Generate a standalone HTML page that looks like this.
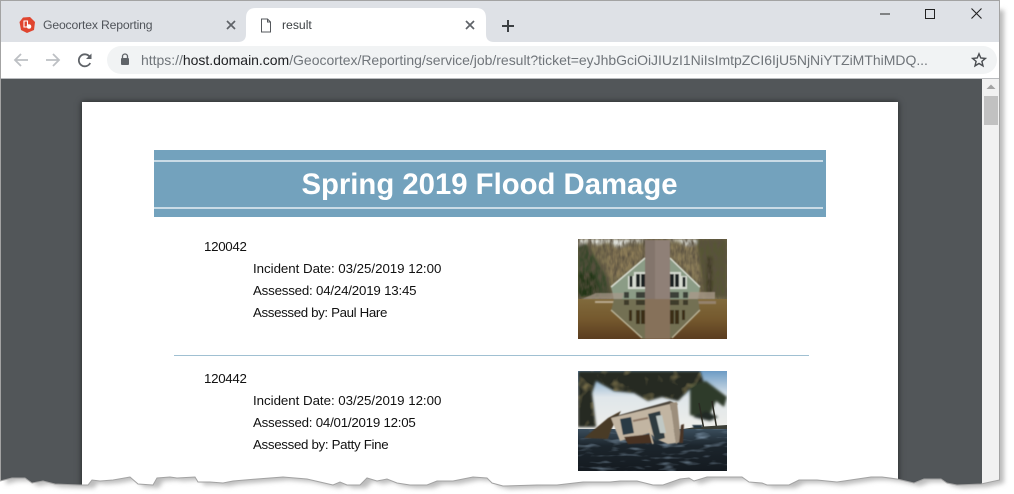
<!DOCTYPE html>
<html><head><meta charset="utf-8"><style>
html,body{margin:0;padding:0;background:#fff}
body{width:1014px;height:494px;overflow:hidden;position:relative;font-family:"Liberation Sans",sans-serif}
.a{position:absolute;white-space:nowrap}
.t{font-size:13.300px;line-height:17px;color:#111}
#win{position:absolute;left:0;top:0;width:1000px;height:494px;background:#fff;overflow:hidden;
clip-path:polygon(0px 481px,12px 478px,25px 478px,32px 483px,43px 481px,55px 484px,80px 485px,88px 485px,92px 480px,100px 481px,113px 480px,130px 477px,138px 484px,153px 485px,157px 478px,170px 477px,177px 478px,195px 477px,198px 482px,210px 482px,223px 483px,233px 481px,257px 479px,283px 477px,307px 479px,320px 482px,333px 485px,340px 482px,347px 485px,360px 485px,367px 478px,377px 481px,387px 479px,397px 483px,410px 485px,427px 485px,437px 481px,453px 481px,473px 477px,487px 478px,492px 483px,503px 486px,537px 485px,557px 485px,583px 482px,593px 482px,610px 482px,620px 481px,637px 481px,653px 485px,663px 485px,680px 479px,689px 478px,694px 481px,707px 477px,731px 477px,742px 477px,749px 482px,762px 483px,767px 485px,789px 485px,799px 480px,817px 480px,837px 482px,871px 477px,882px 477px,897px 479px,914px 483px,924px 479px,941px 479px,947px 483px,957px 485px,981px 484px,999px 480px,1000px 480px,1000px 0px,0px 0px)}
</style></head><body>
<svg class="a" style="left:0;top:0" width="1014" height="494"><defs><filter id="s" x="-5%" y="-5%" width="110%" height="110%"><feGaussianBlur stdDeviation="2.500"/></filter></defs>
<polygon transform="translate(0,-2)" filter="url(#s)" fill="#bcbcbc" points="6,486 18,483 31,483 38,488 49,486 61,489 86,490 94,490 98,485 106,486 119,485 136,482 144,489 159,490 163,483 176,482 183,483 201,482 204,487 216,487 229,488 239,486 263,484 289,482 313,484 326,487 339,490 346,487 353,490 366,490 373,483 383,486 393,484 403,488 416,490 433,490 443,486 459,486 479,482 493,483 498,488 509,491 543,490 563,490 589,487 599,487 616,487 626,486 643,486 659,490 669,490 686,484 695,483 700,486 713,482 737,482 748,482 755,487 768,488 773,490 795,490 805,485 823,485 843,487 877,482 888,482 903,484 920,488 930,484 947,484 953,488 963,490 987,489 1004,485 1004,12 6,12"/></svg>
<div id="win">
<div class="a" style="left:0;top:0;width:1000px;height:42px;background:#dee1e6"></div>
<div class="a" style="left:0;top:42px;width:1000px;height:36px;background:#fff"></div>
<div class="a" style="left:0;top:78px;width:1000px;height:1px;background:#b9bbbe"></div>
<div class="a" style="left:0;top:79px;width:982px;height:415px;background:#525659"></div>
<div class="a" style="left:982px;top:79px;width:18px;height:415px;background:#f1f1f1"></div>
<div class="a" style="left:984px;top:96px;width:14px;height:29px;background:#c1c1c1"></div>
<svg class="a" style="left:982px;top:79px" width="18" height="16"><path d="M4.500 10 L9 5.500 L13.500 10Z" fill="#a3a3a3"/></svg>
<!-- active tab -->
<svg class="a" style="left:238px;top:8px" width="260" height="35"><path d="M0 34 Q8 34 8 26 V10 Q8 0 18 0 H238 Q248 0 248 10 V26 Q248 34 256 34Z" fill="#fff"/></svg>
<svg class="a" style="left:18px;top:16px" width="18" height="18" viewBox="0 0 18 18"><path d="M5 1.500 L12 1 L17 6 L16 14 L9 17 L3 14 L1.500 6Z" fill="#e0452f"/><path d="M6 5 H9.500 V11 H6Z" fill="none" stroke="#fff" stroke-width="1.100"/><circle cx="11" cy="10.500" r="2.300" fill="#fff"/></svg>
<div class="a" style="left:43px;top:18px;font-size:12.2px;line-height:14px;color:#50545a;letter-spacing:-.16px">Geocortex Reporting</div>
<svg class="a" style="left:225px;top:19px" width="12" height="12"><path d="M2 2 L10 10 M10 2 L2 10" stroke="#5f6368" stroke-width="1.700"/></svg>
<svg class="a" style="left:260px;top:18px" width="12" height="15" viewBox="0 0 12 15"><path d="M1.500 1 H7.500 L10.500 4 V14 H1.500Z M7.500 1 V4 H10.500" fill="none" stroke="#55585c" stroke-width="1"/></svg>
<div class="a" style="left:282px;top:18px;font-size:12.2px;line-height:14px;color:#3c4043">result</div>
<svg class="a" style="left:464px;top:19px" width="12" height="12"><path d="M2 2 L10 10 M10 2 L2 10" stroke="#5f6368" stroke-width="1.700"/></svg>
<svg class="a" style="left:500px;top:18px" width="16" height="16"><path d="M8 2 V14 M2 8 H14" stroke="#3c4043" stroke-width="2"/></svg>
<!-- window buttons -->
<svg class="a" style="left:870px;top:4px" width="120" height="20" shape-rendering="crispEdges"><path d="M10 10 H20" stroke="#222" stroke-width="1"/><rect x="55.500" y="5.500" width="9" height="9" fill="none" stroke="#222"/></svg>
<svg class="a" style="left:966px;top:4px" width="20" height="20"><path d="M5.500 4.500 L15.500 14.500 M15.500 4.500 L5.500 14.500" stroke="#222" stroke-width="1.100"/></svg>
<!-- toolbar -->
<svg class="a" style="left:12px;top:51px" width="18" height="18"><path d="M16 9 H3 M9 3 L3 9 L9 15" fill="none" stroke="#bdc0c4" stroke-width="1.800"/></svg>
<svg class="a" style="left:44px;top:51px" width="18" height="18"><path d="M2 9 H15 M9 3 L15 9 L9 15" fill="none" stroke="#bdc0c4" stroke-width="1.800"/></svg>
<svg class="a" style="left:76px;top:51px" width="18" height="18" viewBox="0 0 18 18"><path d="M14.200 12 A6 6 0 1 1 13.500 5.500" fill="none" stroke="#5f6368" stroke-width="1.800"/><path d="M15.500 2.500 V8 H10Z" fill="#5f6368"/></svg>
<div class="a" style="left:107px;top:46px;width:890px;height:28px;background:#f1f3f4;border-radius:14px"></div>
<svg class="a" style="left:119px;top:52px" width="12" height="15"><path d="M3.500 6 V4.500 A2.500 2.500 0 0 1 8.500 4.500 V6" fill="none" stroke="#5f6368" stroke-width="1.300"/><rect x="2" y="6" width="8" height="7" rx="1" fill="#5f6368"/></svg>
<div class="a" id="url" style="left:141px;top:52px;font-size:14px;line-height:16px;color:#70757a;letter-spacing:-.02px">https://<span style="color:#202124">host.domain.com</span>/Geocortex/Reporting/service/job/result?ticket=eyJhbGciOiJIUzI1NiIsImtpZCI6IjU5NjNiYTZiMThiMDQ...</div>
<svg class="a" style="left:971px;top:52px" width="16" height="16" viewBox="0 0 16 16"><path d="M8 1.800 L9.800 6 L14.400 6.400 L10.900 9.400 L12 13.900 L8 11.500 L4 13.900 L5.100 9.400 L1.600 6.400 L6.200 6Z" fill="none" stroke="#4a4d51" stroke-width="1.400"/></svg>
<!-- paper -->
<div class="a" style="left:82px;top:102px;width:816px;height:400px;background:#fff;box-shadow:0 0 6px rgba(0,0,0,.6)"></div>
<div class="a" style="left:154px;top:150px;width:672px;height:67px;background:#73a2bd"></div>
<div class="a" style="left:154px;top:160px;width:669px;height:2px;background:#c9dbe6"></div>
<div class="a" style="left:154px;top:207px;width:669px;height:2px;background:#c9dbe6"></div>
<div class="a" style="left:155px;top:167px;width:669px;text-align:center;font-size:29.300px;line-height:36px;font-weight:bold;color:#fff;">Spring 2019 Flood Damage</div>
<div class="a t" style="left:204px;top:238px;letter-spacing:-.3px">120042</div>
<div class="a t" style="left:253px;top:260px;letter-spacing:-.03px">Incident Date: 03/25/2019 12:00</div>
<div class="a t" style="left:253px;top:282px;letter-spacing:-.2px">Assessed: 04/24/2019 13:45</div>
<div class="a t" style="left:253px;top:304px;letter-spacing:-.36px">Assessed by: Paul Hare</div>
<div class="a" style="left:174px;top:355px;width:635px;height:1px;background:#a0c0d2"></div>
<div class="a t" style="left:204px;top:370px;letter-spacing:-.3px">120442</div>
<div class="a t" style="left:253px;top:392px;letter-spacing:-.03px">Incident Date: 03/25/2019 12:00</div>
<div class="a t" style="left:253px;top:414px;letter-spacing:-.23px">Assessed: 04/01/2019 12:05</div>
<div class="a t" style="left:253px;top:436px;letter-spacing:-.32px">Assessed by: Patty Fine</div>
<!-- house photo -->
<svg class="a" style="left:578px;top:239px" width="149" height="100" viewBox="0 0 149 100"><defs><filter id="b1" x="-5%" y="-5%" width="110%" height="110%"><feGaussianBlur stdDeviation=".5"/></filter><filter id="b2" x="-10%" y="-10%" width="120%" height="120%"><feGaussianBlur stdDeviation="1.500"/></filter><filter id="n" x="0" y="0" width="100%" height="100%"><feTurbulence type="fractalNoise" baseFrequency=".28 .12" numOctaves="2" seed="4"/><feColorMatrix values="0 0 0 0 .1  0 0 0 0 .08  0 0 0 0 .05  1.800 0 0 0 -.55"/></filter><linearGradient id="w" x1="0" y1="0" x2="0" y2="1"><stop offset="0" stop-color="#806a3c"/><stop offset=".5" stop-color="#75592e"/><stop offset="1" stop-color="#5a3c1f"/></linearGradient><clipPath id="c1"><rect width="149" height="100"/></clipPath></defs>
<g clip-path="url(#c1)"><rect width="149" height="60" fill="#7b704f"/>
<g filter="url(#b2)"><path d="M0 0 H149 V3 H120 L112 8 L100 2 H92 V0 H67 V3 L52 4 L40 8 L30 3 L20 6 L8 3 L0 6Z" fill="#dfe1dc"/><path d="M0 6 L8 4 L18 20 L28 36 L34 58 H0Z" fill="#38462c"/><path d="M0 34 H16 L22 58 H0Z" fill="#233418"/><path d="M30 8 H66 V19 L40 38 L30 36Z" fill="#8a7a56"/><path d="M93 6 H118 L124 44 L108 30 L93 18Z" fill="#8a7b58"/><path d="M118 0 H149 V58 H126Z" fill="#565436"/><rect x="129" y="18" width="5" height="40" fill="#3a3422"/></g>
<rect width="149" height="60" filter="url(#n)"/>
<rect y="60" width="149" height="40" fill="url(#w)"/>
<g filter="url(#b1)"><path d="M33 48 L67 19 H92 L122 48 L120 60 H36Z" fill="#8b9c86"/><path d="M33 48 L67 19 M92 19 L122 48" stroke="#d8dcd0" stroke-width="1.500"/>
<path d="M50 37 h6 v13 h-6z M56 33 h12 v17 h-12z M91 33 h12 v17 h-12z M103 37 h6 v13 h-6z" fill="#d5dad0"/>
<rect x="51.500" y="37" width="3" height="11" fill="#1f2420"/><rect x="58" y="35" width="4" height="13" fill="#1f2420"/><rect x="63" y="35" width="4" height="13" fill="#1f2420"/><rect x="92" y="35" width="4" height="13" fill="#1f2420"/><rect x="97" y="35" width="4" height="13" fill="#1f2420"/><rect x="104.500" y="38" width="3" height="10" fill="#1f2420"/>
<path d="M46 53 h5 v6 h-5z M58 53 h9 v6 h-9z M92 53 h9 v6 h-9z M105 53 h5 v6 h-5z" fill="#2b2f2a" opacity=".85"/>
<rect x="67" y="1" width="25" height="59" fill="#8f8077"/><rect x="67" y="1" width="10" height="59" fill="#7c6c66" opacity=".6"/>
<path d="M18 54 H46 L44 60 H4Z" fill="#a8988a" opacity=".7"/><path d="M112 53 H137 V60 H110Z" fill="#a89888" opacity=".8"/>
<rect x="17" y="62" width="30" height="2" fill="#b8a88e"/><rect x="110" y="62" width="28" height="3" fill="#94826c"/>
<path d="M33 72 L65 100 H92 L122 72 L120 60 H36Z" fill="#737052"/><path d="M33 71 L64 99 M94 99 L122 71" stroke="#b9b296" stroke-width="1.300"/>
<rect x="67" y="60" width="25" height="40" fill="#86715a"/>
<path d="M51 71 h3 v11 h-3z M58 71 h4 v14 h-4z M63 71 h4 v14 h-4z M92 71 h4 v14 h-4z M97 71 h4 v14 h-4z M104 71 h3 v10 h-3z" fill="#3a2e18"/>
<path d="M46 61 h5 v5 h-5z M58 61 h9 v5 h-9z M92 61 h9 v5 h-9z M105 61 h5 v5 h-5z" fill="#2b2a20" opacity=".75"/>
</g></g></svg>
<!-- shack photo -->
<svg class="a" style="left:578px;top:371px" width="149" height="100" viewBox="0 0 149 100"><defs><linearGradient id="sk" x1="0" y1="0" x2="0" y2="1"><stop offset="0" stop-color="#6c9bc4"/><stop offset=".45" stop-color="#dfe6ea"/><stop offset="1" stop-color="#eeeeea"/></linearGradient><linearGradient id="wa" x1="0" y1="0" x2="0" y2="1"><stop offset="0" stop-color="#3a4d5c"/><stop offset=".4" stop-color="#1c252c"/><stop offset="1" stop-color="#141a20"/></linearGradient><filter id="b3" x="-5%" y="-5%" width="110%" height="110%"><feGaussianBlur stdDeviation=".5"/></filter><filter id="b4" x="-10%" y="-10%" width="120%" height="120%"><feGaussianBlur stdDeviation="1.300"/></filter><filter id="n2" x="0" y="0" width="100%" height="100%"><feTurbulence type="fractalNoise" baseFrequency=".06 .22" numOctaves="2" seed="8"/><feColorMatrix values="0 0 0 0 .3  0 0 0 0 .42  0 0 0 0 .55  1.600 0 0 0 -.85"/></filter><filter id="n3" x="0" y="0" width="100%" height="100%"><feTurbulence type="fractalNoise" baseFrequency=".09" numOctaves="2" seed="3"/><feColorMatrix values="0 0 0 0 .5  0 0 0 0 .38  0 0 0 0 .14  1.700 0 0 0 -.95"/></filter><clipPath id="c2"><rect width="149" height="100"/></clipPath><clipPath id="c3"><path d="M0 0 H122 L126 12 L112 18 L100 30 L84 26 L70 30 L56 22 L36 20 L18 10 L14 22 L18 56 H0Z"/></clipPath></defs>
<g clip-path="url(#c2)"><rect width="149" height="58" fill="url(#sk)"/>
<g filter="url(#b4)"><path d="M0 0 H122 L126 12 L112 18 L100 30 L84 26 L70 30 L56 22 L36 20 L18 10 L14 22 L18 56 H0Z" fill="#262c24"/><path d="M112 14 L128 10 L149 26 L146 36 L138 30 L130 48 L112 44Z" fill="#2f3a2c"/><path d="M115 46 L128 40 L140 46 L132 50Z" fill="#202c26"/></g>
<g clip-path="url(#c3)"><rect width="130" height="58" filter="url(#n3)"/></g>
<path d="M134 30 L139 59 M121 32 L126 59" stroke="#2a2a22" stroke-width="1.500"/><path d="M105 58 H149 V54 L118 56Z" fill="#3a3d36"/>
<rect y="58" width="149" height="42" fill="url(#wa)"/><rect y="58" width="149" height="42" filter="url(#n2)"/>
<g filter="url(#b3)"><path d="M6 67 L30 47 L43 40 L33 59 L30 68Z" fill="#4a3a28"/><path d="M34 46 L92 30 L100 33 L94 39 L42 52Z" fill="#4e473c"/>
<path d="M33 47 L92 33 L98 72 L90 73 L78 68 L72 62 L42 70 Z" fill="#c2b5a2"/><path d="M92 32 L99 31 L103 70 L98 73Z" fill="#9c8e7c"/><path d="M42 48 L53 46 L56 62 L45 64Z" fill="#2c3a44"/><path d="M70 43 L82 40 L87 67 L77 70Z" fill="#2e3b40"/><path d="M78 45 L84 44 L88 62 L82 62Z" fill="#c0c8c4"/><path d="M55 50 L70 47" stroke="#8c7664" stroke-width="2"/><path d="M46 66 L73 63 L76 72 L50 73Z" fill="#4a3020"/><path d="M71 58 L75 73" stroke="#c8b8a0" stroke-width="1.500"/><path d="M103 54 L106 53 L105 72 L101 72Z" fill="#4a3426"/><path d="M114 54 H125 L123 57 H116Z" fill="#22343f"/></g></g></svg>
</div>
<svg class="a" style="left:0;top:0" width="1014" height="494"><path d="M0 481 L12 478 L25 478 L32 483 L43 481 L55 484 L80 485 L88 485 L92 480 L100 481 L113 480 L130 477 L138 484 L153 485 L157 478 L170 477 L177 478 L195 477 L198 482 L210 482 L223 483 L233 481 L257 479 L283 477 L307 479 L320 482 L333 485 L340 482 L347 485 L360 485 L367 478 L377 481 L387 479 L397 483 L410 485 L427 485 L437 481 L453 481 L473 477 L487 478 L492 483 L503 486 L537 485 L557 485 L583 482 L593 482 L610 482 L620 481 L637 481 L653 485 L663 485 L680 479 L689 478 L694 481 L707 477 L731 477 L742 477 L749 482 L762 483 L767 485 L789 485 L799 480 L817 480 L837 482 L871 477 L882 477 L897 479 L914 483 L924 479 L941 479 L947 483 L957 485 L981 484 L999.500 480 V.5 H.5 V481" fill="none" stroke="#a3a3a3" stroke-width="1"/></svg>
</body></html>
